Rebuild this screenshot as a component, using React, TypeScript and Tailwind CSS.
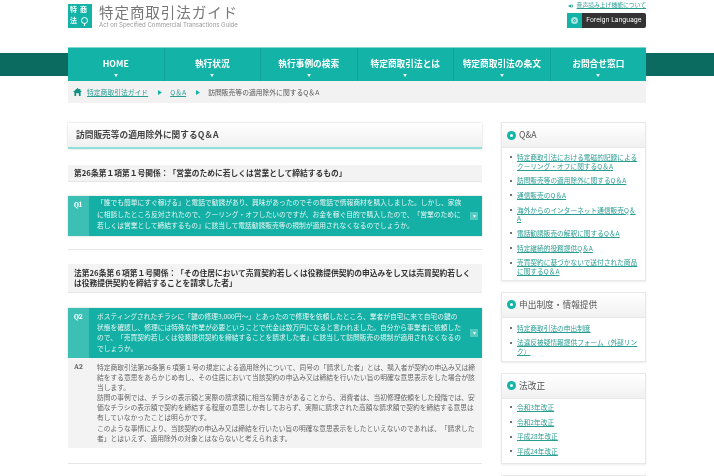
const font = { fontFamily: '"Noto Sans CJK JP", "Noto Sans", sans-serif' };

const navItems = ["HOME", "執行状況", "執行事例の検索", "特定商取引法とは", "特定商取引法の条文", "お問合せ窓口"];

function Triangle({ className }: { className: string }) {
  return (
    <svg viewBox="0 0 6 5" className={className}>
      <path d="M0 0h6L3 5z" fill="currentColor" />
    </svg>
  );
}

function RightTriangle() {
  return (
    <svg viewBox="0 0 5 6" className="h-[5px] w-[4px] text-[#14b3a7]">
      <path d="M0 0l5 3-5 3z" fill="currentColor" />
    </svg>
  );
}

function QBlock({ label, text, tall }: { label: string; text: string; tall?: boolean }) {
  return (
    <div className={`flex bg-[#14b0a5] text-white shadow-[0_0_2px_rgba(0,0,0,0.2)] ${tall ? "h-[50px]" : "h-[40px]"}`}>
      <div className="w-[21px] shrink-0 bg-[#3cbfb5] pl-[6px] font-serif text-[7.5px] font-bold leading-[18px]">{label}</div>
      <div className={`w-[374px] shrink-0 pl-[8px] text-[6.75px] text-[#e4f6f4] [text-spacing-trim:space-all] ${tall ? "pt-[3px] leading-[10.6px]" : "pt-[1px] leading-[11.6px]"}`}>{text}</div>
      <div className="flex flex-1 items-center justify-center pl-[3px]">
        <div className="flex h-[8px] w-[8px] items-center justify-center bg-[#53c9bf]">
          <Triangle className="h-[3px] w-[3px] text-white" />
        </div>
      </div>
    </div>
  );
}

function SubHead({ children, h }: { children: React.ReactNode; h: string }) {
  return (
    <div className={`flex items-center border-b border-[#e6e6e6] bg-[#f3f3f3] pl-[6px] pr-[6px] text-[7.75px] font-bold leading-[10.5px] text-[#333] [text-spacing-trim:space-all] ${h}`}>
      <div>{children}</div>
    </div>
  );
}

function SideCard({ title, items, spacing }: { title: string; items: string[]; spacing: string }) {
  return (
    <div className="border border-[#e8e8e8] bg-white shadow-[0_1px_2px_rgba(0,0,0,0.08)]">
      <div className="flex h-[25px] items-center gap-[3px] border-b border-[#e8e8e8] bg-gradient-to-b from-white to-[#f1f1f1] pl-[5px]">
        <span className="flex h-[9px] w-[9px] items-center justify-center rounded-full bg-[#12b5aa]">
          <span className="h-[3px] w-[3px] rounded-full bg-white" />
        </span>
        <span className="text-[8.7px] text-[#555]">{title}</span>
      </div>
      <ul className={`flex flex-col gap-[5.8px] pl-[8px] pr-[6px] ${spacing}`}>
        {items.map((t) => (
          <li key={t} className="flex gap-[5px] text-[6.7px] leading-[8.8px]">
            <span className="mt-[3.4px] h-[2px] w-[2px] shrink-0 rounded-full bg-[#444]" />
            <a className="text-[#2a9d93] underline">{t}</a>
          </li>
        ))}
      </ul>
    </div>
  );
}

export default function App() {
  return (
    <div className="relative h-[476px] w-[714px] overflow-hidden bg-white blur-[0.4px]" style={font}>
      <div className="absolute left-0 right-0 top-[53px] h-[23px] bg-[#0b6b60]" />
      <div className="relative mx-auto w-[578px]">
        <header className="flex h-[47px] justify-between">
          <div className="flex items-start gap-[7px] pt-[4px]">
            <div className="relative h-[24px] w-[24px] bg-[#14b3a7] text-white">
              <span className="absolute left-[2px] top-[1px] text-[7px] font-bold leading-[9px]">特</span>
              <span className="absolute left-[12px] top-[1px] text-[7px] font-bold leading-[9px]">商</span>
              <span className="absolute left-[2px] top-[12px] text-[7px] font-bold leading-[9px]">法</span>
              <span className="absolute left-[13px] top-[13px] h-[7px] w-[7px] rounded-full border-[1.5px] border-white" />
              <span className="absolute left-[16px] top-[19px] h-[3px] w-[1px] bg-white" />
            </div>
            <div>
              <div className="text-[14.5px] leading-[16px] tracking-[0.95px] text-[#777]">特定商取引法ガイド</div>
              <div className="mt-[1px] text-[6px] leading-[7px] text-[#999]" style={{ fontFamily: "Inter, sans-serif" }}>Act on Specified Commercial Transactions Guide</div>
            </div>
          </div>
          <div className="flex flex-col items-end pt-[1px]">
            <div className="flex h-[9px] items-center gap-[3px] text-[5.8px] text-[#2a9d93]">
              <svg viewBox="0 0 6 5" className="h-[4px] w-[6px]">
                <path d="M0 1.5h1.5L3.5 0v5L1.5 3.5H0zM4.5 1v3h1V1z" fill="currentColor" />
              </svg>
              <span className="underline">音声読み上げ機能について</span>
            </div>
            <div className="mt-[3px] flex h-[15px] w-[79px]">
              <div className="flex w-[15px] items-center justify-center bg-[#14b3a7]">
                <span className="flex h-[7px] w-[7px] items-center justify-center rounded-full bg-[#a7e4df]">
                  <span className="h-[3px] w-[3px] rounded-full border border-[#14b3a7]" />
                </span>
              </div>
              <div className="flex flex-1 items-center justify-center rounded-r-[2px] bg-[#333] text-[6.5px] text-white" style={{ fontFamily: "Inter, sans-serif" }}>Foreign Language</div>
            </div>
          </div>
        </header>

        <nav className="flex h-[34px] border-t border-[#7fd8d1] bg-[#14b3a7] shadow-[0_1px_0_#9fe0da]">
          {navItems.map((n, i) => (
            <div key={n} className={`relative flex flex-1 justify-center pt-[10px] text-[8.7px] font-bold leading-[11px] text-white ${i > 0 ? "border-l border-[#10a197]" : ""}`}>
              {n}
              <Triangle className="absolute bottom-[4px] left-1/2 h-[3px] w-[4px] -translate-x-1/2 text-white" />
            </div>
          ))}
        </nav>

        <div className="flex h-[22px] items-center bg-[#f2f2f2] pl-[5px] text-[6.8px]">
          <svg viewBox="0 0 10 9" className="mr-[5px] h-[8px] w-[9px] text-[#0e8f84]">
            <path d="M5 0l2 1.8V1h1.2v1.9L10 4.5H8.5V9h-2V6h-3v3h-2V4.5H0z" fill="currentColor" />
          </svg>
          <a className="text-[#2a9d93] underline">特定商取引法ガイド</a>
          <span className="ml-[10px] mr-[8px]"><RightTriangle /></span>
          <a className="text-[#2a9d93] underline">Q＆A</a>
          <span className="ml-[10px] mr-[8px]"><RightTriangle /></span>
          <span className="text-[#555]">訪問販売等の適用除外に関するQ＆A</span>
        </div>

        <div className="mt-[20px] flex justify-between">
          <main className="w-[414px]">
            <h1 className="flex h-[26px] items-center border-b-[2px] border-[#8fe0d8] bg-gradient-to-b from-white to-[#f0f0f0] pl-[8px] text-[8.7px] font-bold text-[#444] shadow-[0_0_2px_rgba(0,0,0,0.2)]">
              訪問販売等の適用除外に関するQ＆A
            </h1>
            <div className="mt-[16px]">
              <SubHead h="h-[17px]">第26条第１項第１号関係：「営業のために若しくは営業として締結するもの」</SubHead>
            </div>
            <div className="mt-[14px]">
              <QBlock label="Q1" text="「誰でも簡単にすぐ稼げる」と電話で勧誘があり、興味があったのでその電話で情報商材を購入しました。しかし、家族に相談したところ反対されたので、クーリング・オフしたいのですが、お金を稼ぐ目的で購入したので、「営業のために若しくは営業として締結するもの」に該当して電話勧誘販売等の規制が適用されなくなるのでしょうか。" />
            </div>
            <div className="mt-[13px] h-px bg-[#e6e6e6]" />
            <div className="mt-[14px]">
              <SubHead h="h-[29px]">法第26条第６項第１号関係：「その住居において売買契約若しくは役務提供契約の申込みをし又は売買契約若しくは役務提供契約を締結することを請求した者」</SubHead>
            </div>
            <div className="mt-[15px]">
              <QBlock tall label="Q2" text="ポスティングされたチラシに「鍵の修理3,000円～」とあったので修理を依頼したところ、業者が自宅に来て自宅の鍵の状態を確認し、修理には特殊な作業が必要ということで代金は数万円になると言われました。自分から事業者に依頼したので、「売買契約若しくは役務提供契約を締結することを請求した者」に該当して訪問販売の規制が適用されなくなるのでしょうか。" />
            </div>
            <div className="flex h-[90px] bg-[#f3f3f3] text-[#666]">
              <div className="w-[21px] shrink-0 pl-[6px] pt-[2px] font-serif text-[7.5px] font-bold leading-[14px]">A2</div>
              <div className="flex-1 pl-[8px] pr-[4px] pt-[4px] text-[6.75px] leading-[10.1px] [text-spacing-trim:space-all]">
                <p>特定商取引法第26条第６項第１号の規定による適用除外について、同号の「請求した者」とは、購入者が契約の申込み又は締結をする意思をあらかじめ有し、その住居において当該契約の申込み又は締結を行いたい旨の明確な意思表示をした場合が該当します。</p>
                <p>訪問の事例では、チラシの表示額と実際の請求額に相当な開きがあることから、消費者は、当初修理依頼をした段階では、安価なチラシの表示額で契約を締結する程度の意思しか有しておらず、実際に請求された高額な請求額で契約を締結する意思は有していなかったことは明らかです。</p>
                <p>このような事情により、当該契約の申込み又は締結を行いたい旨の明確な意思表示をしたといえないのであれば、「請求した者」とはいえず、適用除外の対象とはならないと考えられます。</p>
              </div>
            </div>
            <div className="mt-[15px] h-px bg-[#e6e6e6]" />
          </main>

          <aside className="-mt-px flex w-[145px] flex-col gap-[11px]">
            <SideCard
              title="Q&A"
              spacing="pt-[5px] pb-[4px]"
              items={[
                "特定商取引法における電磁的記録によるクーリング・オフに関するQ＆A",
                "訪問販売等の適用除外に関するQ＆A",
                "通信販売のQ＆A",
                "海外からのインターネット通信販売Q＆A",
                "電話勧誘販売の解釈に関するQ＆A",
                "特定継続的役務提供Q＆A",
                "売買契約に基づかないで送付された商品に関するQ＆A",
              ]}
            />
            <SideCard title="申出制度・情報提供" spacing="pt-[6px] pb-[5px]" items={["特定商取引法の申出制度", "法違反被疑情報提供フォーム（外部リンク）"]} />
            <SideCard title="法改正" spacing="pt-[4px] pb-[7px]" items={["令和3年改正", "令和2年改正", "平成28年改正", "平成24年改正"]} />
            <div className="h-[20px] border border-[#e8e8e8] bg-gradient-to-b from-white to-[#f1f1f1]" />
          </aside>
        </div>
      </div>
    </div>
  );
}
